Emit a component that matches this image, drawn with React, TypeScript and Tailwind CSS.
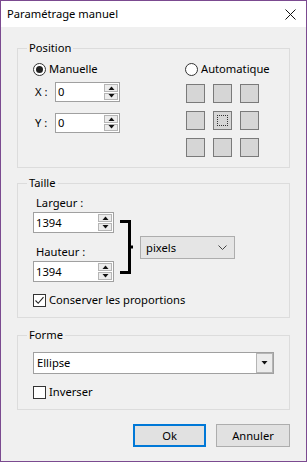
import React from "react";

function Radio({ checked, label }: { checked?: boolean; label: string }) {
    return (
        <div className="flex items-center h-[16px]">
            <span className="w-[13px] h-[13px] rounded-full border border-[#333] bg-white flex items-center justify-center">
                {checked && <span className="w-[7px] h-[7px] rounded-full bg-[#222]"></span>}
            </span>
            <span className="ml-[3px]">{label}</span>
        </div>
    );
}

function Check({ checked, label }: { checked?: boolean; label: string }) {
    return (
        <div className="flex items-center h-[16px]">
            <span className="w-[13px] h-[13px] border border-[#333] bg-white flex items-center justify-center">
                {checked && (
                    <svg width="11" height="11" viewBox="0 0 11 11">
                        <path d="M1.5 5.5 L4.2 8.3 L9.5 2.2" fill="none" stroke="#222" strokeWidth="1.1" />
                    </svg>
                )}
            </span>
            <span className="ml-[3px]">{label}</span>
        </div>
    );
}

function Triangle({ up }: { up?: boolean }) {
    return (
        <svg width="7" height="4" viewBox="0 0 7 4">
            <path d={up ? "M0.5 4 L3.5 0.5 L6.5 4 Z" : "M0.5 0 L3.5 3.5 L6.5 0 Z"} fill="#111" />
        </svg>
    );
}

function Spin({ value, width, height }: { value: string; width: string; height: string }) {
    return (
        <div className={`flex bg-white border border-[#a0a0a0] ${width} ${height}`}>
            <span className="flex-1 pl-[2px] flex items-center leading-none">{value}</span>
            <div className="flex flex-col gap-[1px] py-[1px] pr-[1px] w-[15px]">
                <div className="flex-1 border border-[#b5b5b5] bg-[#ececec] flex items-center justify-center">
                    <Triangle up />
                </div>
                <div className="flex-1 border border-[#b5b5b5] bg-[#ececec] flex items-center justify-center">
                    <Triangle />
                </div>
            </div>
        </div>
    );
}

function Group({ title, className, children }: { title: string; className?: string; children: React.ReactNode }) {
    return (
        <fieldset className={`border border-[#dcdcdc] ${className ?? ""}`}>
            <legend className="ml-[9px] px-[2px] leading-[16px]">{title}</legend>
            {children}
        </fieldset>
    );
}

export default function App() {
    const cells = Array.from({ length: 9 }, (_, i) => i);

    return (
        <div className="w-[307px] h-[462px] border border-[#7b4a90] bg-[#f0f0f0] flex flex-col text-[11.2px] leading-[16px] text-black font-['Segoe_UI','Noto_Sans',sans-serif]">
            <div className="h-[26px] bg-white flex items-center justify-between pl-[6px] pr-[10px] shrink-0">
                <span>Paramétrage manuel</span>
                <svg width="11" height="11" viewBox="0 0 11 11">
                    <path d="M0.5 0.5 L10.5 10.5 M10.5 0.5 L0.5 10.5" stroke="#111" strokeWidth="1" />
                </svg>
            </div>

            <div className="flex flex-col px-[16px] pt-[13px]">
                <Group title="Position" className="pt-[5px] pb-[10px]">
                    <div className="flex">
                        <div className="w-[167px] pl-[15px] flex flex-col">
                            <Radio checked label="Manuelle" />
                            <div className="flex items-center mt-[5px]">
                                <span className="w-[22px] pl-[2px]">X :</span>
                                <Spin value="0" width="w-[65px]" height="h-[20px]" />
                            </div>
                            <div className="flex items-center mt-[11px]">
                                <span className="w-[22px] pl-[2px]">Y :</span>
                                <Spin value="0" width="w-[65px]" height="h-[20px]" />
                            </div>
                        </div>
                        <div className="flex flex-col">
                            <Radio label="Automatique" />
                            <div className="grid grid-cols-3 gap-[8px] mt-[7px] ml-[1px] w-[73px]">
                                {cells.map((i) => (
                                    <div key={i} className="w-[19px] h-[19px] border border-[#7a7a7a] bg-[#d6d6d6] flex items-center justify-center">
                                        {i === 4 && <div className="w-[11px] h-[11px] border border-dotted border-[#333]"></div>}
                                    </div>
                                ))}
                            </div>
                        </div>
                    </div>
                </Group>

                <Group title="Taille" className="mt-[7px] pt-[4px] pb-[9px]">
                    <div className="pl-[15px] flex items-start">
                        <div className="flex flex-col w-[81px]">
                            <span className="pl-[3px]">Largeur :</span>
                            <div className="mt-[1px]">
                                <Spin value="1394" width="w-[81px]" height="h-[21px]" />
                            </div>
                            <span className="pl-[3px] mt-[11px]">Hauteur :</span>
                            <div className="mt-[1px]">
                                <Spin value="1394" width="w-[81px]" height="h-[21px]" />
                            </div>
                        </div>
                        <svg width="14" height="54" viewBox="0 0 14 54" className="mt-[25px] ml-[6px]">
                            <path d="M0 1.5 H9.5 V52.5 H0 M9.5 27 H13" fill="none" stroke="#000" strokeWidth="3" />
                        </svg>
                        <div className="mt-[41px] ml-[6px] w-[95px] h-[23px] border border-[#adadad] bg-[#e5e5e5] flex items-center justify-between pl-[5px] pr-[7px]">
                            <span>pixels</span>
                            <svg width="9" height="5" viewBox="0 0 9 5">
                                <path d="M0.5 0.5 L4.5 4.5 L8.5 0.5" fill="none" stroke="#444" strokeWidth="1" />
                            </svg>
                        </div>
                    </div>
                    <div className="pl-[15px] mt-[10px]">
                        <Check checked label="Conserver les proportions" />
                    </div>
                </Group>

                <Group title="Forme" className="mt-[9px] pt-[9px] pb-[9px]">
                    <div className="pl-[15px] pr-[15px]">
                        <div className="h-[22px] bg-white border border-[#a0a0a0] flex items-center">
                            <span className="flex-1 pl-[3px]">Ellipse</span>
                            <div className="w-[17px] h-[20px] border border-[#b5b5b5] bg-[#ececec] flex items-center justify-center">
                                <Triangle />
                            </div>
                        </div>
                        <div className="mt-[10px]">
                            <Check label="Inverser" />
                        </div>
                    </div>
                </Group>

                <div className="flex justify-end gap-[10px] mt-[14px]">
                    <button className="w-[73px] h-[23px] border-2 border-[#0078d7] bg-[#e1e1e1]">Ok</button>
                    <button className="w-[74px] h-[23px] border border-[#adadad] bg-[#e1e1e1]">Annuler</button>
                </div>
            </div>
        </div>
    );
}
